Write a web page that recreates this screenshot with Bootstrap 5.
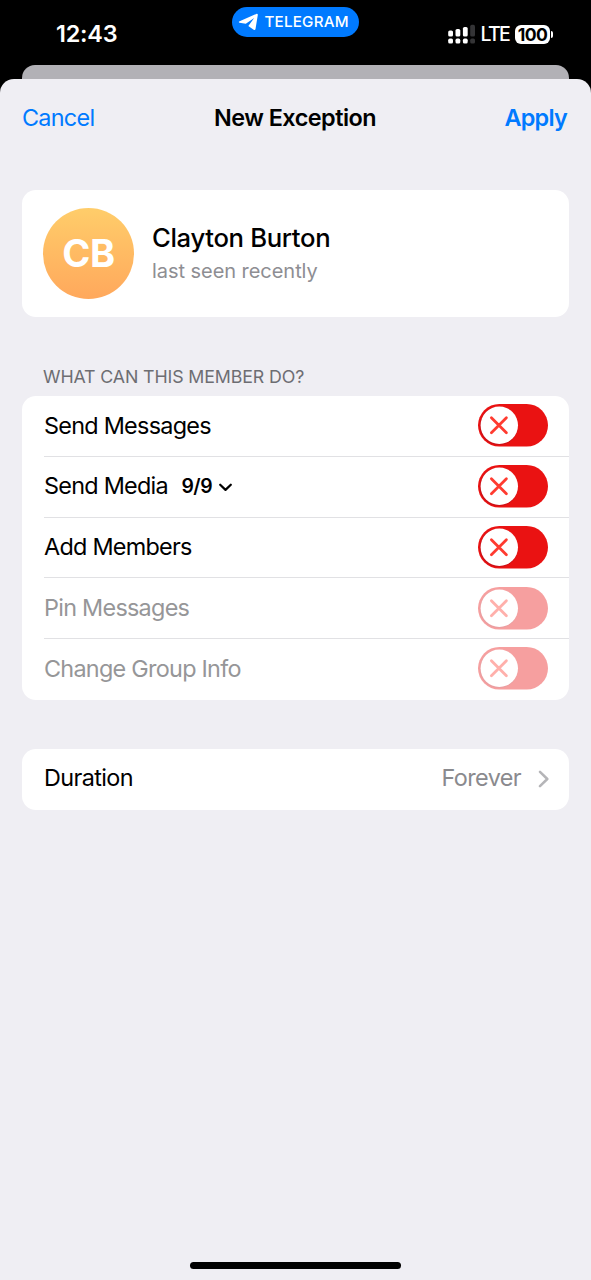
<!DOCTYPE html>
<html lang="en">
<head>
<meta charset="utf-8">
<meta name="viewport" content="width=device-width, initial-scale=1">
<title>New Exception</title>
<link rel="stylesheet" href="https://cdn.jsdelivr.net/npm/bootstrap@5.3.0/dist/css/bootstrap.min.css">
<style>
  body { font-family: Inter, "Liberation Sans", sans-serif; font-size: 23.4px; line-height: 30px; background: #000; color: #000; letter-spacing: -.73px; }
  svg { display: block; flex: none; }
  .screen { height: 1280px; overflow: hidden; }
  .status { height: 65px; color: #fff; padding: 0 38px 0 56px; }
  .clock { font-size: 23.4px; font-weight: 600; width: 175.5px; padding-top: 19px; letter-spacing: -.2px; }
  .pill { height: 30px; width: 127.5px; margin-top: 7px; border-radius: 15px; background: #007aff; font-size: 15.2px; line-height: 30px; font-weight: 500; letter-spacing: .2px; padding-left: 6px; gap: 6px; }
  .signals { padding-top: 19px; }
  .lte { font-size: 19.5px; font-weight: 500; letter-spacing: -1.7px; margin-left: 5px; }
  .battery { width: 35px; height: 19px; border-radius: 6px; background: #fff; color: #000; font-size: 17.6px; line-height: 19px; font-weight: 700; letter-spacing: -.6px; margin-left: 6px; }
  .battery-tip { width: 2px; height: 7px; border-radius: 0 2px 2px 0; background: #fff; margin-left: 1px; }
  .behind { height: 14px; margin: 0 22px; border-radius: 13px 13px 0 0; background: #b2b1b6; }
  .sheet { background: #efeef3; border-radius: 14px 14px 0 0; padding: 0 22px; }
  .sheet-bar { height: 78px; }
  .sheet-bar a, .sheet-bar span { flex: 1 1 0; color: #007aff; text-decoration: none; }
  .sheet-bar a:last-child { padding-right: 2px; }
  .sheet-bar .title { flex: none; color: #000; font-weight: 600; letter-spacing: -.5px; margin-left: 1px; }
  .panel { background: #fff; border-radius: 14px; }
  .profile { height: 127px; margin-top: 33px; padding-left: 21px; gap: 18px; }
  .avatar { width: 91px; height: 91px; padding-bottom: 1px; background: linear-gradient(#ffcd6a, #ffa85c); color: #fff; font-size: 38px; font-weight: 700; letter-spacing: -.5px; }
  .person { font-size: 25.7px; font-weight: 500; line-height: 32px; letter-spacing: -.35px; padding-top: 1px; }
  .seen { font-size: 20px; line-height: 30px; color: #8e8e93; margin-top: 2px; letter-spacing: -.05px; }
  .section-label { font-size: 17.8px; line-height: 24px; color: #6d6d72; margin: 48px 0 7px 21px; letter-spacing: -.13px; }
  .rights { padding-left: 22px; height: 304px; }
  .right-row { height: 60.8px; padding: 0 21px .4px 0; border-bottom: 1.4px solid #e1e1e4; }
  .right-row:last-child { border-bottom-color: transparent; }
  .off { color: #969698; }
  .off svg { opacity: .4; }
  .right-row > span { margin-bottom: .4px; }
  .count { font-size: 19.4px; font-weight: 600; margin-left: 13.5px; letter-spacing: -.5px; }
  .chevron-down { margin: 1px 0 0 6.5px; }
  .duration { height: 61px; margin-top: 48.5px; padding: 0 20px 0 22px; letter-spacing: -.6px; }
  .duration span { margin-bottom: 2px; }
  .value { color: #8a8a8e; margin-right: 17px; }
  .home { width: 211px; height: 7px; border-radius: 4px; background: #000; margin-bottom: 11px; }
</style>
</head>
<body>
<svg width="0" height="0" class="position-absolute" aria-hidden="true">
  <symbol id="switch" viewBox="0 0 70 43">
    <rect width="70" height="42.6" rx="21.3" fill="#ea1212"/>
    <circle cx="20.8" cy="21.9" r="19.2" fill="#b90d18" opacity=".6"/>
    <circle cx="21.3" cy="21.3" r="18.7" fill="#fff"/>
    <path d="M13.4 13.7l15 15M28.4 13.7l-15 15" stroke="#ff3b30" stroke-width="2.8" stroke-linecap="round"/>
  </symbol>
</svg>
<div class="screen d-flex flex-column">
  <header class="status d-flex align-items-start">
    <div class="clock">12:43</div>
    <div class="pill d-flex align-items-center">
      <svg width="21" height="18" viewBox="0 0 21 18" fill="#fff"><path d="M1.600 8.300L18.300.9c.9-.4 1.700.1 1.500 1.100l-2.300 13.900c-.2 1.100-.9 1.400-1.800.8L10.300 13.100 16.200 5.100 7.800 10.700 1.500 9.700C.4 9.400.5 8.800 1.600 8.300z"/></svg>
      <span>TELEGRAM</span>
    </div>
    <div class="signals d-flex align-items-center ms-auto">
      <svg width="27" height="20" viewBox="0 0 27 20" fill="#fff"><rect x=".2" y="6.5" width="4.8" height="6" rx="1.6"/><rect x=".2" y="14.6" width="4.8" height="5" rx="1.6"/><rect x="7.5" y="5" width="4.8" height="7.5" rx="1.6"/><rect x="7.5" y="14.6" width="4.8" height="5" rx="1.6"/><rect x="14.9" y="3" width="4.8" height="9.5" rx="1.6"/><rect x="14.9" y="14.6" width="4.8" height="5" rx="1.6"/><g fill="#343436"><rect x="22.2" y=".8" width="4.8" height="11.7" rx="1.6"/><rect x="22.2" y="14.6" width="4.8" height="5" rx="1.6"/></g></svg>
      <span class="lte">LTE</span>
      <span class="battery text-center">100</span><span class="battery-tip"></span>
    </div>
  </header>
  <div class="behind"></div>
  <main class="sheet flex-grow-1 d-flex flex-column">
    <nav class="sheet-bar d-flex align-items-center">
      <a href="#">Cancel</a>
      <span class="title">New Exception</span>
      <a href="#" class="text-end fw-semibold">Apply</a>
    </nav>
    <section class="panel profile d-flex align-items-center">
      <div class="avatar rounded-circle d-flex align-items-center justify-content-center">CB</div>
      <div>
        <div class="person">Clayton Burton</div>
        <div class="seen">last seen recently</div>
      </div>
    </section>
    <div class="section-label">WHAT CAN THIS MEMBER DO?</div>
    <section class="panel rights">
      <div class="right-row d-flex align-items-center justify-content-between"><span>Send Messages</span><svg width="70" height="43"><use href="#switch"/></svg></div>
      <div class="right-row d-flex align-items-center">
        <span>Send Media</span><span class="count">9/9</span>
        <svg class="chevron-down" width="13" height="9" viewBox="0 0 13 9" fill="none" stroke="#000" stroke-width="2.2" stroke-linecap="round" stroke-linejoin="round"><path d="M1.200 1.700l5.300 5.200 5.300-5.200"/></svg>
        <svg class="ms-auto" width="70" height="43"><use href="#switch"/></svg>
      </div>
      <div class="right-row d-flex align-items-center justify-content-between"><span>Add Members</span><svg width="70" height="43"><use href="#switch"/></svg></div>
      <div class="right-row off d-flex align-items-center justify-content-between"><span>Pin Messages</span><svg width="70" height="43"><use href="#switch"/></svg></div>
      <div class="right-row off d-flex align-items-center justify-content-between"><span>Change Group Info</span><svg width="70" height="43"><use href="#switch"/></svg></div>
    </section>
    <section class="panel duration d-flex align-items-center">
      <span>Duration</span>
      <span class="value ms-auto">Forever</span>
      <svg width="11" height="18" viewBox="0 0 11 18" fill="none" stroke="#b5b5b8" stroke-width="2.5" stroke-linecap="round" stroke-linejoin="round"><path d="M2 1.800l7.300 7.200L2 16.200"/></svg>
    </section>
    <div class="home mt-auto mx-auto"></div>
  </main>
</div>
<script src="https://cdn.jsdelivr.net/npm/bootstrap@5.3.0/dist/js/bootstrap.bundle.min.js"></script>
</body>
</html>
